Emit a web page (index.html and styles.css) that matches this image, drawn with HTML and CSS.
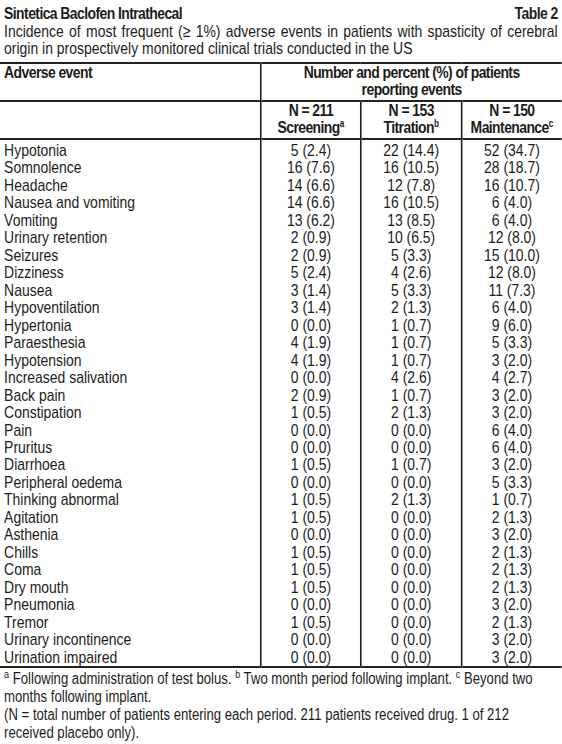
FILE: index.html
```html
<!DOCTYPE html>
<html lang="en">
<head>
  <meta charset="UTF-8" />
  <title>Sintetica Baclofen Intrathecal - Table 2</title>
  <link rel="stylesheet" href="styles.css">
</head>
<body>

  <div class="page">
    <div class="caption">
      <div class="title-row">
        <span>Sintetica Baclofen Intrathecal</span>
        <span>Table 2</span>
      </div>
      <p>Incidence of most frequent (&ge; 1%) adverse events in patients with spasticity of cerebral origin in prospectively monitored clinical trials conducted in the US</p>
    </div>

    <table class="events">
      <thead>
        <tr class="head-top">
          <th class="event-col">Adverse event</th>
          <th colspan="3" class="center">Number and percent (%) of patients<br>reporting events</th>
        </tr>
        <tr class="head-sub">
          <th></th>
          <th class="center num-col">N = 211<br>Screening<sup>a</sup></th>
          <th class="center num-col">N = 153<br>Titration<sup>b</sup></th>
          <th class="center">N = 150<br>Maintenance<sup>c</sup></th>
        </tr>
      </thead>
      <tbody id="rows"></tbody>
    </table>

    <div class="notes">
      <p><sup>a</sup> Following administration of test bolus. <sup>b</sup> Two month period following implant. <sup>c</sup> Beyond two<br>months following implant.</p>
      <p>(N = total number of patients entering each period. 211 patients received drug. 1 of 212<br>received placebo only).</p>
    </div>
  </div>

  <script>
    const data = [
      ['Hypotonia', '5 (2.4)', '22 (14.4)', '52 (34.7)'],
      ['Somnolence', '16 (7.6)', '16 (10.5)', '28 (18.7)'],
      ['Headache', '14 (6.6)', '12 (7.8)', '16 (10.7)'],
      ['Nausea and vomiting', '14 (6.6)', '16 (10.5)', '6 (4.0)'],
      ['Vomiting', '13 (6.2)', '13 (8.5)', '6 (4.0)'],
      ['Urinary retention', '2 (0.9)', '10 (6.5)', '12 (8.0)'],
      ['Seizures', '2 (0.9)', '5 (3.3)', '15 (10.0)'],
      ['Dizziness', '5 (2.4)', '4 (2.6)', '12 (8.0)'],
      ['Nausea', '3 (1.4)', '5 (3.3)', '11 (7.3)'],
      ['Hypoventilation', '3 (1.4)', '2 (1.3)', '6 (4.0)'],
      ['Hypertonia', '0 (0.0)', '1 (0.7)', '9 (6.0)'],
      ['Paraesthesia', '4 (1.9)', '1 (0.7)', '5 (3.3)'],
      ['Hypotension', '4 (1.9)', '1 (0.7)', '3 (2.0)'],
      ['Increased salivation', '0 (0.0)', '4 (2.6)', '4 (2.7)'],
      ['Back pain', '2 (0.9)', '1 (0.7)', '3 (2.0)'],
      ['Constipation', '1 (0.5)', '2 (1.3)', '3 (2.0)'],
      ['Pain', '0 (0.0)', '0 (0.0)', '6 (4.0)'],
      ['Pruritus', '0 (0.0)', '0 (0.0)', '6 (4.0)'],
      ['Diarrhoea', '1 (0.5)', '1 (0.7)', '3 (2.0)'],
      ['Peripheral oedema', '0 (0.0)', '0 (0.0)', '5 (3.3)'],
      ['Thinking abnormal', '1 (0.5)', '2 (1.3)', '1 (0.7)'],
      ['Agitation', '1 (0.5)', '0 (0.0)', '2 (1.3)'],
      ['Asthenia', '0 (0.0)', '0 (0.0)', '3 (2.0)'],
      ['Chills', '1 (0.5)', '0 (0.0)', '2 (1.3)'],
      ['Coma', '1 (0.5)', '0 (0.0)', '2 (1.3)'],
      ['Dry mouth', '1 (0.5)', '0 (0.0)', '2 (1.3)'],
      ['Pneumonia', '0 (0.0)', '0 (0.0)', '3 (2.0)'],
      ['Tremor', '1 (0.5)', '0 (0.0)', '2 (1.3)'],
      ['Urinary incontinence', '0 (0.0)', '0 (0.0)', '3 (2.0)'],
      ['Urination impaired', '0 (0.0)', '0 (0.0)', '3 (2.0)']
    ];

    const tbody = document.getElementById('rows');
    data.forEach(row => {
      const tr = document.createElement('tr');
      row.forEach((val, i) => {
        const td = document.createElement('td');
        td.textContent = val;
        if (i > 0) td.className = 'center';
        tr.appendChild(td);
      });
      tbody.appendChild(tr);
    });
  </script>

</body>
</html>
```

FILE: styles.css
```css
* { box-sizing: border-box; margin: 0; padding: 0; }
html, body {
  background: #fff;
  color: #1c1c1c;
  font-family: "Liberation Sans", Arial, sans-serif;
  font-size: 17px;
  line-height: 17.47px;
  overflow: hidden;
}
/* no narrow font installed: squeeze the whole sheet horizontally */
.page {
  width: 685px;
  transform: scaleX(0.82);
  transform-origin: 0 0;
}
.caption { padding: 5px 5px 0 5px; }
.title-row {
  display: flex;
  justify-content: space-between;
  font-weight: bold;
  letter-spacing: -0.7px;
  line-height: 17px;
}
.caption p { margin-top: 2px; line-height: 16.5px; text-align: justify; }

.events {
  width: 100%;
  margin-top: 5px;
  border-collapse: collapse;
  table-layout: fixed;
  border-top: 2px solid #222;
  border-bottom: 2px solid #222;
}
.events th {
  font-weight: bold;
  letter-spacing: -0.7px;
  text-align: left;
  vertical-align: top;
  padding: 0 5px;
  height: 38px;
  line-height: 17px;
}
.events th + th, .events td + td { border-left: 2px solid #222; }
.events thead tr + tr th { border-top: 2px solid #222; }
.events thead tr:last-child th { border-bottom: 2px solid #222; }
.events .event-col { width: 318px; }
.events .num-col { width: 122px; }
.events td {
  padding: 0 5px;
  height: 17.47px;
  white-space: nowrap;
}
.events tbody tr:first-child td { padding-top: 2px; height: 19.47px; }
.center { text-align: center !important; }
sup { font-size: 10px; line-height: 0; vertical-align: 6px; letter-spacing: 0; }

.notes { padding: 2px 5px 0 5px; font-size: 16px; }
.notes p { line-height: 18px; white-space: nowrap; }
.notes sup { font-size: 11px; }
</style>
```
